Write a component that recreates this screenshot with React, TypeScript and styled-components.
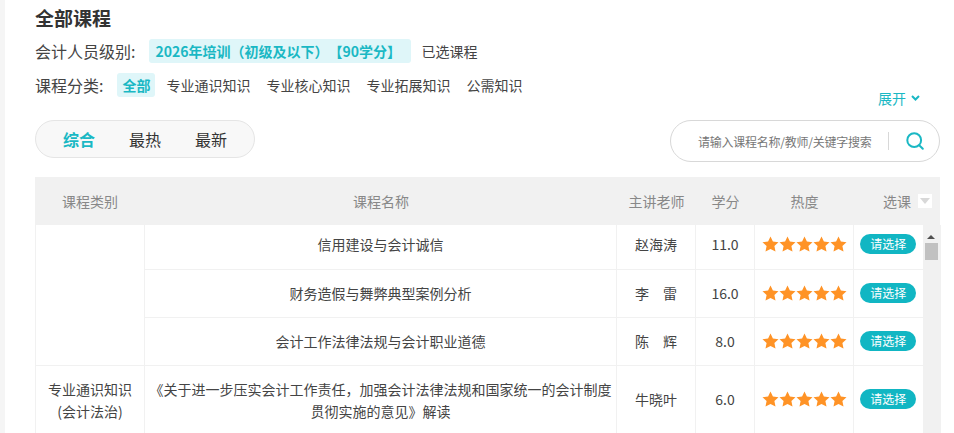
import React from "react"
import styled, { createGlobalStyle } from "styled-components"

const GlobalStyle = createGlobalStyle`
  html, body {
    margin: 0;
    padding: 0;
    height: 433px;
    overflow: hidden;
    background: #fff;
    font-family: "Noto Sans CJK SC", "Noto Sans", sans-serif;
    color: #333;
    text-spacing-trim: space-all;
  }
  * { box-sizing: border-box; }
`

const categories = ["全部", "专业通识知识", "专业核心知识", "专业拓展知识", "公需知识"]
const sorts = ["综合", "最热", "最新"]

const rows = [
  { id: 1, name: ["信用建设与会计诚信"], teacher: "赵海涛", credit: "11.0", height: 44 },
  { id: 2, name: ["财务造假与舞弊典型案例分析"], teacher: "李　雷", credit: "16.0", height: 48 },
  { id: 3, name: ["会计工作法律法规与会计职业道德"], teacher: "陈　辉", credit: "8.0", height: 48 },
  {
    id: 4,
    name: ["《关于进一步压实会计工作责任，加强会计法律法规和国家统一的会计制度", "贯彻实施的意见》解读"],
    teacher: "牛晓叶",
    credit: "6.0",
    height: 68
  }
]

const Star = () => (
  <svg width="17" height="16" viewBox="0 0 17 16">
    <polygon fill="#ff9326" points="8.5,0.5 10.9,5.6 16.5,6.3 12.4,10.1 13.5,15.6 8.5,12.9 3.5,15.6 4.6,10.1 0.5,6.3 6.1,5.6" />
  </svg>
)

const App: React.FC = () => (
  <Page>
    <GlobalStyle />
    <Title>全部课程</Title>
    <FilterRow>
      <Label>会计人员级别:</Label>
      <LevelPill>2026年培训（初级及以下）【90学分】</LevelPill>
      <Selected>已选课程</Selected>
    </FilterRow>
    <CategoryRow>
      <Label>课程分类:</Label>
      {categories.map((c, i) => (
        <Category key={c} $active={i === 0}>{c}</Category>
      ))}
    </CategoryRow>
    <ExpandRow>
      <Expand>
        展开
        <svg width="9" height="6" viewBox="0 0 9 6">
          <path d="M1 1l3.5 3.5L8 1" fill="none" stroke="#1ab8c4" strokeWidth="2" />
        </svg>
      </Expand>
    </ExpandRow>
    <Toolbar>
      <SortTabs>
        {sorts.map((s, i) => (
          <SortTab key={s} $active={i === 0}>{s}</SortTab>
        ))}
      </SortTabs>
      <Search>
        <SearchText>请输入课程名称/教师/关键字搜索</SearchText>
        <SearchDivider />
        <svg width="20" height="20" viewBox="0 0 20 20">
          <circle cx="9.2" cy="9.2" r="6.9" fill="none" stroke="#1ab8c4" strokeWidth="2" />
          <path d="M14.2 14.2l3.6 3.6" stroke="#1ab8c4" strokeWidth="2" strokeLinecap="round" />
        </svg>
      </Search>
    </Toolbar>
    <Header>
      <HeadCell $w={110}>课程类别</HeadCell>
      <HeadCell $w={472}>课程名称</HeadCell>
      <HeadCell $w={79}>主讲老师</HeadCell>
      <HeadCell $w={59}>学分</HeadCell>
      <HeadCell $w={99}>热度</HeadCell>
      <ChooseHead>
        选课
        <DropBox />
      </ChooseHead>
    </Header>
    <BodyWrap>
      <Table>
        <colgroup>
          <col width="109" />
          <col width="472" />
          <col width="79" />
          <col width="59" />
          <col width="99" />
          <col width="69" />
        </colgroup>
        <tbody>
          {rows.map((r, i) => (
            <tr key={r.id}>
              {i === 0 && <Td rowSpan={3} />}
              {i === 3 && (
                <Td>
                  专业通识知识
                  <br />
                  (会计法治)
                </Td>
              )}
              <NameTd style={{ height: r.height }}>
                {r.name.map(line => (
                  <div key={line}>{line}</div>
                ))}
              </NameTd>
              <Td>{r.teacher}</Td>
              <Td>{r.credit}</Td>
              <Td>
                <Stars>
                  {[0, 1, 2, 3, 4].map(n => (
                    <Star key={n} />
                  ))}
                </Stars>
              </Td>
              <Td>
                <Choose>请选择</Choose>
              </Td>
            </tr>
          ))}
        </tbody>
      </Table>
      <Scrollbar>
        <ArrowUp />
        <Thumb />
      </Scrollbar>
    </BodyWrap>
  </Page>
)

const Page = styled.div`
  width: 954px;
  height: 433px;
  overflow: hidden;
  padding: 5px 14px 0 30px;
  border-left: 5px solid #f5f5f5;
`

const Title = styled.h2`
  margin: 0;
  font-size: 19px;
  line-height: 26px;
  font-weight: 700;
  color: #333;
`

const FilterRow = styled.div`
  display: flex;
  align-items: center;
  height: 24px;
  margin-top: 8px;
`

const CategoryRow = styled(FilterRow)`
  margin-top: 10px;
`

const Label = styled.span`
  font-size: 16px;
  color: #444;
  white-space: nowrap;
`

const LevelPill = styled.span`
  margin-left: 14px;
  padding: 0 6px;
  width: 262px;
  height: 24px;
  line-height: 24px;
  border-radius: 3px;
  background: #dff6f9;
  color: #1ab8c4;
  font-size: 14px;
  font-weight: 700;
  white-space: nowrap;
`

const Selected = styled.span`
  margin-left: 10px;
  font-size: 14px;
  color: #444;
`

const Category = styled.span<{ $active?: boolean }>`
  height: 24px;
  line-height: 24px;
  padding: 0 5px;
  margin-right: 6px;
  margin-left: ${p => (p.$active ? "14px" : "0")};
  border-radius: 3px;
  font-size: 14px;
  font-weight: ${p => (p.$active ? 700 : 400)};
  color: ${p => (p.$active ? "#1ab8c4" : "#444")};
  background: ${p => (p.$active ? "#dff6f9" : "transparent")};
`

const ExpandRow = styled.div`
  display: flex;
  justify-content: flex-end;
  height: 20px;
  margin-top: -9px;
  padding-right: 20px;
`

const Expand = styled.span`
  display: inline-flex;
  align-items: center;
  gap: 5px;
  font-size: 14px;
  color: #1ab8c4;
`

const Toolbar = styled.div`
  display: flex;
  justify-content: space-between;
  align-items: flex-start;
  margin-top: 12px;
`

const SortTabs = styled.div`
  display: flex;
  align-items: center;
  width: 220px;
  height: 38px;
  padding-left: 10px;
  border: 1px solid #e5e5e5;
  border-radius: 19px;
  background: #f8f8f8;
`

const SortTab = styled.span<{ $active?: boolean }>`
  width: 66px;
  text-align: center;
  font-size: 16px;
  font-weight: ${p => (p.$active ? 700 : 400)};
  color: ${p => (p.$active ? "#1ab8c4" : "#333")};
`

const Search = styled.div`
  display: flex;
  align-items: center;
  width: 270px;
  height: 42px;
  padding-left: 27px;
  border: 1px solid #d8d8d8;
  border-radius: 21px;
`

const SearchText = styled.span`
  width: 174px;
  font-size: 12px;
  letter-spacing: -0.25px;
  color: #777;
  white-space: nowrap;
`

const SearchDivider = styled.span`
  width: 1px;
  height: 18px;
  margin: 0 16px 0 16px;
  background: #d8d8d8;
`

const Header = styled.div`
  display: flex;
  align-items: center;
  width: 905px;
  height: 48px;
  margin-top: 15px;
  background: #f1f1f1;
`

const HeadCell = styled.div<{ $w: number }>`
  width: ${p => p.$w}px;
  text-align: center;
  font-size: 14px;
  color: #888;
`

const ChooseHead = styled.div`
  display: flex;
  align-items: center;
  padding-left: 29px;
  font-size: 14px;
  color: #888;
`

const DropBox = styled.span`
  width: 14px;
  height: 14px;
  margin-left: 7px;
  background: #fff;
  position: relative;
  &::after {
    content: "";
    position: absolute;
    left: 2px;
    top: 4px;
    border-left: 5px solid transparent;
    border-right: 5px solid transparent;
    border-top: 6px solid #d8d8d8;
  }
`

const BodyWrap = styled.div`
  display: flex;
  width: 905px;
`

const Table = styled.table`
  width: 887px;
  table-layout: fixed;
  border-collapse: collapse;
  font-size: 14px;
  color: #444;
  tr:first-child td { padding-bottom: 5px; }
  tr:last-child td:nth-child(-n+2) { padding-top: 2px; }
`

const Td = styled.td`
  padding: 0;
  text-align: center;
  line-height: 22px;
  border: 1px solid #f1f1f1;
  border-top: none;
  &:last-child { border-right: none; }
`

const NameTd = styled(Td)``

const Stars = styled.div`
  display: flex;
  justify-content: center;
`

const Choose = styled.span`
  display: block;
  width: 56px;
  height: 20px;
  margin: 0 auto;
  line-height: 20px;
  border-radius: 10px;
  background: #11b6c3;
  color: #fff;
  font-size: 12px;
`

const Scrollbar = styled.div`
  width: 18px;
  background: #f1f1f1;
  padding: 10px 3px 0 2px;
  display: flex;
  flex-direction: column;
  align-items: center;
  height: 208px;
`

const ArrowUp = styled.span`
  border-left: 4px solid transparent;
  border-right: 4px solid transparent;
  border-bottom: 4px solid #505050;
`

const Thumb = styled.span`
  width: 13px;
  height: 17px;
  margin-top: 4px;
  background: #c1c1c1;
`

export default App
